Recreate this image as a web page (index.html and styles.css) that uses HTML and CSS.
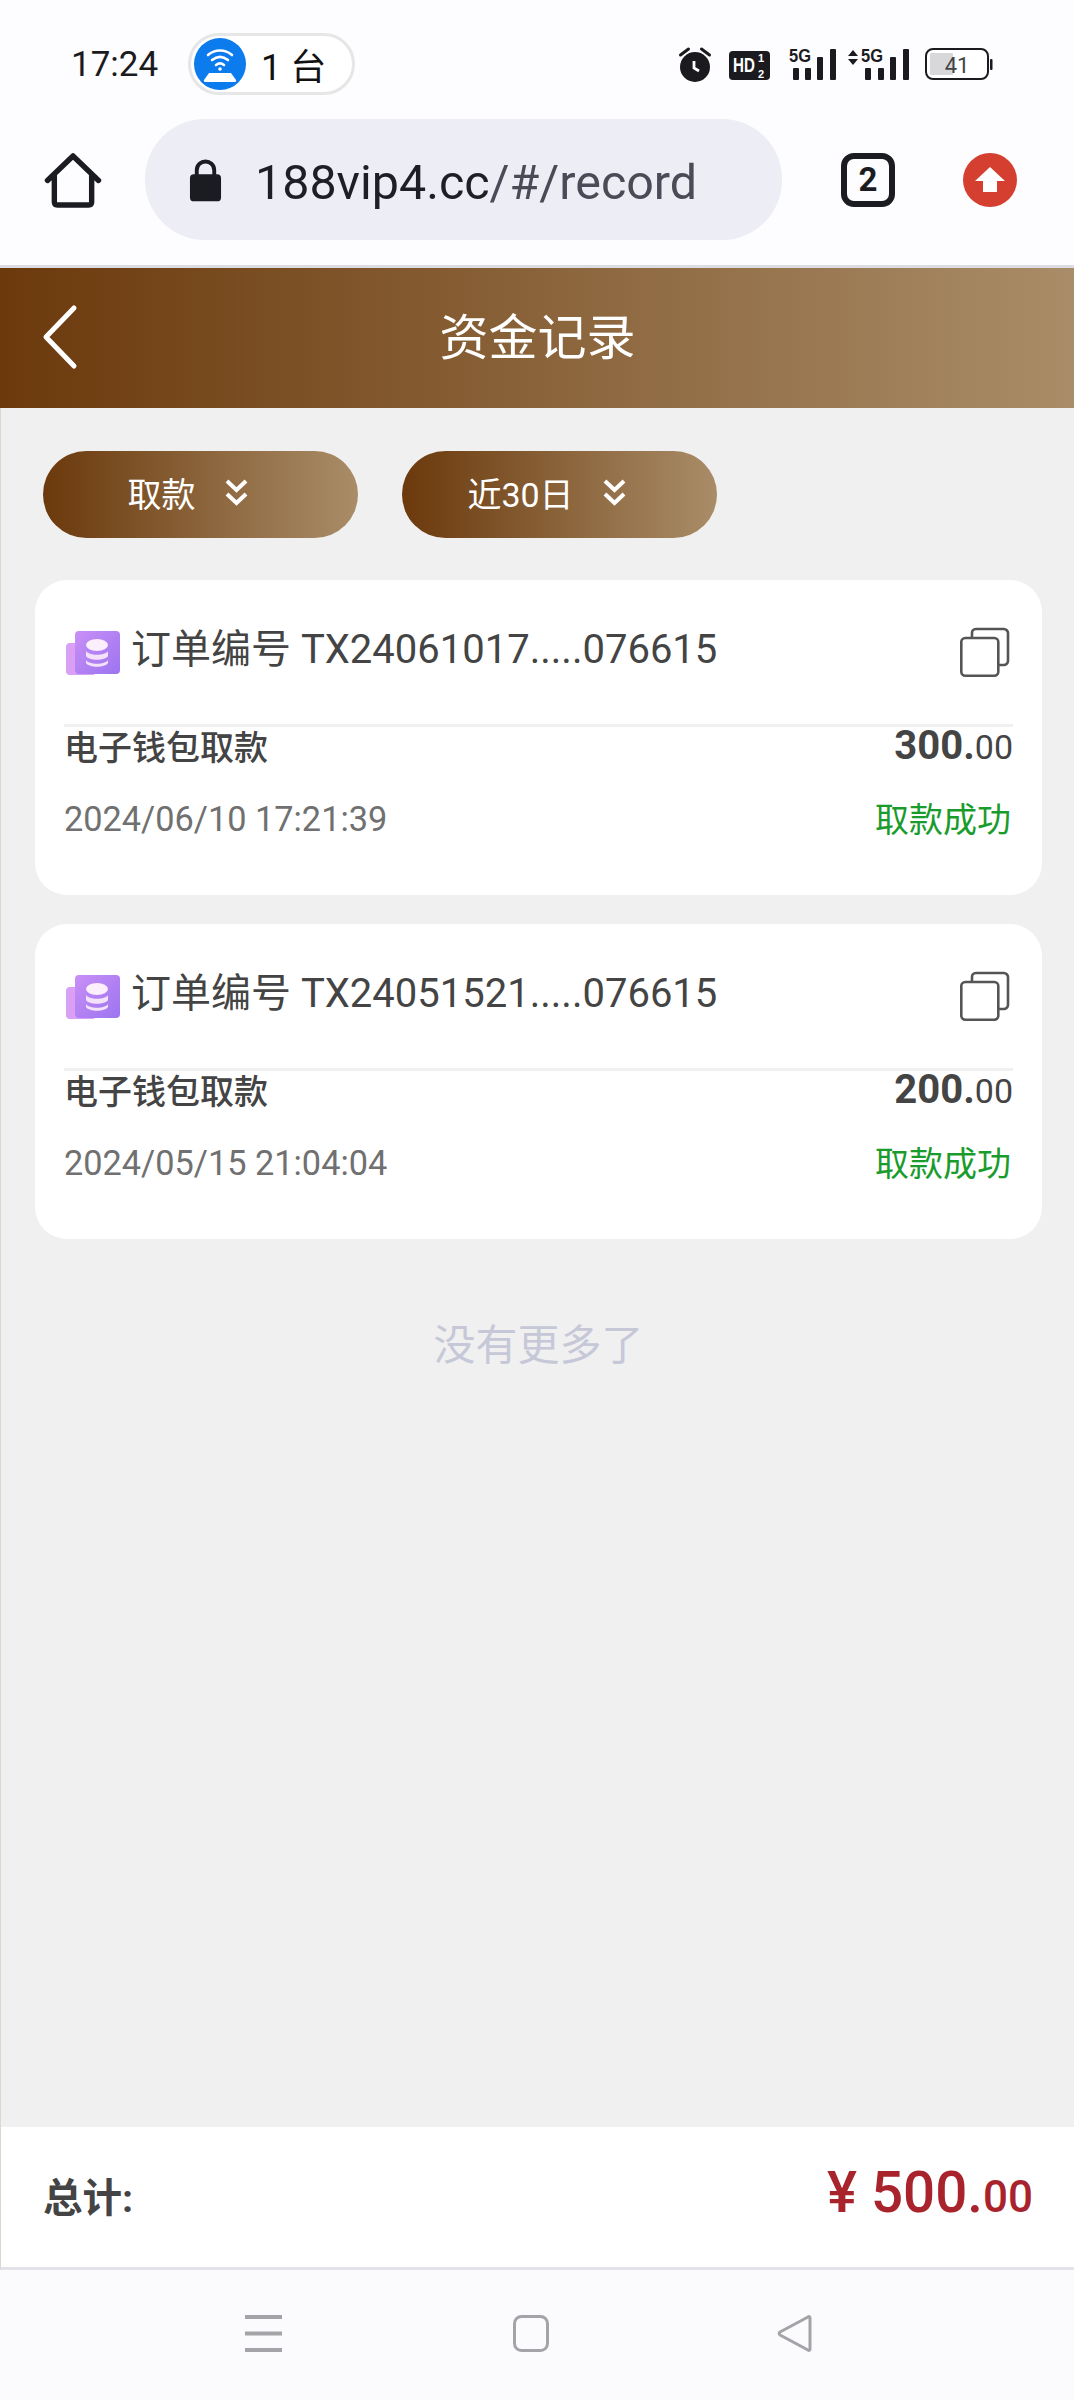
FILE: index.html
```html
<!DOCTYPE html>
<html lang="zh">
<head>
    <meta charset="UTF-8">
    <title>资金记录</title>
    <link rel="stylesheet" href="styles.css">
</head>
<body>
<div class="status">
    <span class="time">17:24</span>
    <div class="hotspot">
        <svg class="hotspot-icon" viewBox="0 0 52 52">
            <circle cx="26" cy="26" r="26" fill="#0b7bee"/>
            <path d="M14 17c7-6 17-6 24 0M18 22c5-4 11-4 16 0M22 27c2.500-2 5.500-2 8 0" fill="none" stroke="#fff" stroke-width="2.600" stroke-linecap="round"/>
            <circle cx="26" cy="31" r="1.800" fill="#fff"/>
            <path d="M15 35h22l5 7c.500 1 0 2-1 2H11c-1 0-1.500-1-1-2z" fill="#fff"/>
        </svg>
        <span class="hotspot-text">1 台</span>
    </div>
    <div class="status-icons">
        <svg class="ico-alarm" viewBox="0 0 32 35">
            <circle cx="16" cy="20" r="15" fill="#1b1b1f"/>
            <path d="M1.500 8l8-6M30.500 8l-8-6" stroke="#1b1b1f" stroke-width="3" stroke-linecap="round"/>
            <path d="M15 14v7l5 3" fill="none" stroke="#fff" stroke-width="2.800"/>
        </svg>
        <svg class="ico-hd" viewBox="0 0 41 29">
            <rect width="41" height="29" rx="4" fill="#1b1b1f"/>
            <text transform="translate(4 21) scale(.72 1)" class="hd-text">HD</text>
            <text x="29" y="11" class="hd-small">1</text>
            <text x="29" y="27" class="hd-small">2</text>
        </svg>
        <svg class="ico-sig" viewBox="0 0 48 33">
            <text x="0" y="15" class="sig-text" textLength="22" lengthAdjust="spacingAndGlyphs">5G</text>
            <rect x="4" y="21" width="6" height="12" rx="1" fill="#1b1b1f"/>
            <rect x="16" y="21" width="6" height="12" rx="1" fill="#1b1b1f"/>
            <rect x="28" y="10" width="6" height="23" rx="1" fill="#1b1b1f"/>
            <rect x="41" y="2" width="6" height="31" rx="1" fill="#1b1b1f"/>
        </svg>
        <svg class="ico-sig2" viewBox="0 0 61 33">
            <path d="M0 9l5-6 5 6zM0 12l5 6 5-6z" fill="#1b1b1f"/>
            <text x="13" y="15" class="sig-text" textLength="22" lengthAdjust="spacingAndGlyphs">5G</text>
            <rect x="17" y="21" width="6" height="12" rx="1" fill="#1b1b1f"/>
            <rect x="30" y="21" width="6" height="12" rx="1" fill="#1b1b1f"/>
            <rect x="42" y="10" width="6" height="23" rx="1" fill="#1b1b1f"/>
            <rect x="55" y="2" width="6" height="31" rx="1" fill="#1b1b1f"/>
        </svg>
        <svg class="ico-batt" viewBox="0 0 68 33">
            <rect x="1" y="1" width="62" height="30" rx="7" fill="#fff" stroke="#1b1b1f" stroke-width="2"/>
            <rect x="5" y="5" width="23" height="22" rx="1" fill="#d8d8da"/>
            <rect x="65" y="11" width="2.500" height="11" rx="1" fill="#1b1b1f"/>
            <text x="32" y="25" text-anchor="middle" class="batt-text">41</text>
        </svg>
    </div>
</div>

<div class="toolbar">
    <svg class="ico-home" viewBox="0 0 56 56">
        <path d="M2 28L28 3l26 25M9 23v27c0 2 1 3 3 3h32c2 0 3-1 3-3V23" fill="none" stroke="#1b1c22" stroke-width="5.500" stroke-linecap="round" stroke-linejoin="round"/>
    </svg>
    <div class="url-pill">
        <svg class="ico-lock" viewBox="0 0 34 44">
            <path d="M8 18v-6c0-12 18-12 18 0v6" fill="none" stroke="#1b1c22" stroke-width="4"/>
            <rect x="1" y="16" width="32" height="28" rx="4" fill="#1b1c22"/>
        </svg>
        <span class="url"><b class="url-host">188vip4.cc</b>/#/record</span>
    </div>
    <div class="tab-count">2</div>
    <svg class="ico-up" viewBox="0 0 54 54">
        <circle cx="27" cy="27" r="27" fill="#d43f30"/>
        <path d="M27 14l15 14h-8v11H20V28h-8z" fill="#fff"/>
    </svg>
</div>

<div class="header">
    <svg class="ico-back" viewBox="0 0 36 64">
        <path d="M33 3L5 32l28 29" fill="none" stroke="#fff" stroke-width="5" stroke-linecap="round" stroke-linejoin="round"/>
    </svg>
    <h1 class="title">资金记录</h1>
</div>

<div class="content">
    <div class="filters">
        <div class="filter">
            <span>取款</span>
            <svg class="ico-dbl" viewBox="0 0 23 27"><path d="M2 2l9.500 9L21 2M2 15l9.500 9L21 15" fill="none" stroke="#fff" stroke-width="4"/></svg>
        </div>
        <div class="filter">
            <span>近30日</span>
            <svg class="ico-dbl" viewBox="0 0 23 27"><path d="M2 2l9.500 9L21 2M2 15l9.500 9L21 15" fill="none" stroke="#fff" stroke-width="4"/></svg>
        </div>
    </div>

    <div class="card">
        <div class="card-head">
            <svg class="ico-order" viewBox="0 0 54 44">
                <rect x="0" y="12" width="30" height="32" rx="4" fill="#d9a0f6"/>
                <rect x="9" y="0" width="45" height="43" rx="4" fill="url(#pur1)"/>
                <ellipse cx="31" cy="14" rx="11" ry="6" fill="#fbeffd"/>
                <path d="M20 20c3 5 19 5 22 0v5c-3 5-19 5-22 0zM20 29c3 5 19 5 22 0v3c-3 5-19 5-22 0z" fill="#f4e2fb"/>
                <defs>
                    <linearGradient id="pur1" x1="0" y1="0" x2="1" y2="1">
                        <stop offset="0" stop-color="#c98ff6"/>
                        <stop offset="1" stop-color="#9c74f0"/>
                    </linearGradient>
                </defs>
            </svg>
            <span class="order-no">订单编号 TX24061017.....076615</span>
            <svg class="ico-copy" viewBox="0 0 49 49">
                <path d="M12 10V5c0-2 1-4 4-4h28c2 0 4 2 4 4v28c0 2-2 4-4 4h-5" fill="none" stroke="#555" stroke-width="2.600"/>
                <rect x="1.300" y="10" width="37" height="37.700" rx="4" fill="none" stroke="#555" stroke-width="2.600"/>
            </svg>
        </div>
        <div class="card-row">
            <span class="kind">电子钱包取款</span>
            <span class="amount">300.<small>00</small></span>
        </div>
        <div class="card-row card-row-low">
            <span class="date">2024/06/10 17:21:39</span>
            <span class="state">取款成功</span>
        </div>
    </div>

    <div class="card">
        <div class="card-head">
            <svg class="ico-order" viewBox="0 0 54 44">
                <rect x="0" y="12" width="30" height="32" rx="4" fill="#d9a0f6"/>
                <rect x="9" y="0" width="45" height="43" rx="4" fill="url(#pur1)"/>
                <ellipse cx="31" cy="14" rx="11" ry="6" fill="#fbeffd"/>
                <path d="M20 20c3 5 19 5 22 0v5c-3 5-19 5-22 0zM20 29c3 5 19 5 22 0v3c-3 5-19 5-22 0z" fill="#f4e2fb"/>
            </svg>
            <span class="order-no">订单编号 TX24051521.....076615</span>
            <svg class="ico-copy" viewBox="0 0 49 49">
                <path d="M12 10V5c0-2 1-4 4-4h28c2 0 4 2 4 4v28c0 2-2 4-4 4h-5" fill="none" stroke="#555" stroke-width="2.600"/>
                <rect x="1.300" y="10" width="37" height="37.700" rx="4" fill="none" stroke="#555" stroke-width="2.600"/>
            </svg>
        </div>
        <div class="card-row">
            <span class="kind">电子钱包取款</span>
            <span class="amount">200.<small>00</small></span>
        </div>
        <div class="card-row card-row-low">
            <span class="date">2024/05/15 21:04:04</span>
            <span class="state">取款成功</span>
        </div>
    </div>

    <p class="no-more">没有更多了</p>
</div>

<div class="total">
    <span class="total-label">总计:</span>
    <span class="total-num">¥ 500.<small>00</small></span>
</div>

<div class="navbar">
    <svg class="nav-menu" viewBox="0 0 37 37">
        <path d="M0 2h37M0 18.500h37M0 35h37" stroke="#a3a3a8" stroke-width="4"/>
    </svg>
    <svg class="nav-home" viewBox="0 0 36 37">
        <rect x="1.500" y="1.500" width="33" height="34" rx="7" fill="none" stroke="#a3a3a8" stroke-width="3"/>
    </svg>
    <svg class="nav-back" viewBox="0 0 36 37">
        <path d="M33 3c0-1-1-2-2-1L3 17c-1 1-1 2 0 3l28 15c1 1 2 0 2-1z" fill="none" stroke="#a3a3a8" stroke-width="3" stroke-linejoin="round"/>
    </svg>
</div>
</body>
</html>
```

FILE: styles.css
```css
* {
    box-sizing: border-box;
}

body {
    margin: 0;
    width: 1074px;
    height: 2400px;
    display: flex;
    flex-direction: column;
    background: #fdfcfe;
    color: #444;
    font-family: Roboto, "Noto Sans CJK SC", sans-serif;
}

svg {
    display: block;
    flex: none;
    overflow: visible;
}

/* status bar */
.status {
    height: 119px;
    padding: 33px 0 0 71px;
    display: flex;
    align-items: flex-start;
}

.time {
    width: 117px;
    height: 60px;
    font-size: 35px;
    line-height: 64px;
    color: #1b1b1f;
}

.hotspot {
    width: 167px;
    height: 62px;
    padding: 0 0 0 3px;
    border: 3px solid #e6e6e6;
    border-radius: 31px;
    background: #fff;
    display: flex;
    align-items: center;
    gap: 15px;
}

.hotspot-icon {
    width: 52px;
    height: 52px;
}

.hotspot-text {
    font-size: 36px;
    color: #111;
}

.status-icons {
    margin-left: 324px;
    display: flex;
    align-items: flex-end;
    height: 47px;
}

.ico-alarm {
    width: 32px;
    height: 35px;
    margin-bottom: -2px;
}

.ico-hd {
    width: 41px;
    height: 29px;
    margin-left: 18px;
}

.hd-text {
    font: bold 21px "Liberation Sans", sans-serif;
    fill: #fff;
}

.hd-small {
    font: bold 11px "Liberation Sans", sans-serif;
    fill: #fff;
}

.ico-sig {
    width: 48px;
    height: 33px;
    margin-left: 19px;
}

.ico-sig2 {
    width: 61px;
    height: 33px;
    margin-left: 11px;
}

.sig-text {
    font: bold 19px "Liberation Sans", sans-serif;
    fill: #1b1b1f;
}

.ico-batt {
    width: 68px;
    height: 33px;
    margin-left: 16px;
    margin-bottom: -1px;
}

.batt-text {
    font: 22px Roboto, sans-serif;
    fill: #444;
}

/* browser bar */
.toolbar {
    height: 146px;
    padding-left: 45px;
    display: flex;
    align-items: flex-start;
}

.ico-home {
    width: 56px;
    height: 55px;
    margin-top: 34px;
}

.url-pill {
    width: 637px;
    height: 121px;
    margin-left: 44px;
    padding-left: 44px;
    border-radius: 60px;
    background: #ecedf5;
    display: flex;
    align-items: center;
    gap: 33px;
}

.ico-lock {
    width: 33px;
    height: 44px;
}

.url {
    margin-top: 6px;
    font-size: 48.400px;
    color: #4a4b57;
}

.url-host {
    font-weight: 400;
    color: #1e1f26;
}

.tab-count {
    width: 54px;
    height: 54px;
    margin: 34px 0 0 59px;
    border: 6px solid #1b1c22;
    border-radius: 13px;
    text-align: center;
    font-size: 33px;
    font-weight: 700;
    line-height: 41px;
    color: #1b1c22;
}

.ico-up {
    width: 54px;
    height: 54px;
    margin: 34px 0 0 68px;
}

/* page header */
.header {
    height: 143px;
    padding-left: 41px;
    border-top: 3px solid #dcdce4;
    background: linear-gradient(90deg, #6b390c, #a98d68);
    display: flex;
    align-items: center;
}

.ico-back {
    width: 36px;
    height: 64px;
    margin-bottom: 3px;
}

.title {
    flex: 1;
    margin: 0 76px 9px 0;
    text-align: center;
    font-size: 49px;
    font-weight: 400;
    color: #fff;
}

/* list */
.content {
    flex: 1;
    padding: 43px 32px 0 34px;
    border-left: 1px solid #d9d9d0;
    background: #f0f0f0;
}

.filters {
    display: flex;
    gap: 44px;
    margin: 0 0 42px 8px;
}

.filter {
    width: 315px;
    height: 87px;
    padding: 0 26px 4px 0;
    border-radius: 44px;
    background: linear-gradient(90deg, #6b390c, #a98d68);
    display: flex;
    align-items: center;
    justify-content: center;
    gap: 29px;
    font-size: 34px;
    color: #fff;
}

.ico-dbl {
    width: 23px;
    height: 27px;
}

.card {
    height: 315px;
    margin-bottom: 29px;
    padding: 0 29px;
    border-radius: 32px;
    background: #fff;
}

.card-head {
    height: 147px;
    padding: 0 4px 0 2px;
    border-bottom: 3px solid #f0f0f0;
    display: flex;
    align-items: center;
    gap: 11px;
}

.ico-order {
    width: 54px;
    height: 44px;
    margin-top: 2px;
}

.order-no {
    flex: 1;
    margin-bottom: 13px;
    font-size: 40px;
    color: #444;
}

.ico-copy {
    width: 49px;
    height: 49px;
    margin-top: 1px;
}

.card-row {
    display: flex;
    justify-content: space-between;
    align-items: center;
    height: 44px;
    margin-top: -4px;
}

.card-row-low {
    margin-top: 30px;
}

.kind {
    font-size: 34px;
    font-weight: 500;
    color: #444;
}

.amount {
    font-size: 40px;
    font-weight: 700;
    color: #444;
}

.amount small {
    font-size: 34px;
    font-weight: 400;
}

.date {
    font-size: 34.300px;
    color: #707070;
}

.state {
    margin: 0 2px 3px 0;
    font-size: 34px;
    color: #1a9c2c;
}

.no-more {
    margin: 72px 0 0;
    text-align: center;
    font-size: 42px;
    color: #c6c8d8;
}

/* footer */
.total {
    height: 143px;
    padding: 0 41px 0 42px;
    border-bottom: 3px solid #e2e2e8;
    border-left: 1px solid #d9d9d0;
    background: #fff;
    display: flex;
    justify-content: space-between;
    align-items: center;
}

.total-label {
    margin-bottom: 5px;
    font-size: 39.500px;
    font-weight: 700;
    color: #444;
}

.total-num {
    margin-bottom: 8px;
    font-size: 56.500px;
    font-weight: 500;
    color: #a9232d;
}

.total-num small {
    font-size: 44px;
}

.navbar {
    height: 130px;
    padding: 0 0 3px 245px;
    background: #fbfafd;
    display: flex;
    align-items: center;
}

.nav-menu {
    width: 37px;
    height: 37px;
}

.nav-home {
    width: 36px;
    height: 37px;
    margin-left: 231px;
}

.nav-back {
    width: 36px;
    height: 37px;
    margin-left: 228px;
}
```
